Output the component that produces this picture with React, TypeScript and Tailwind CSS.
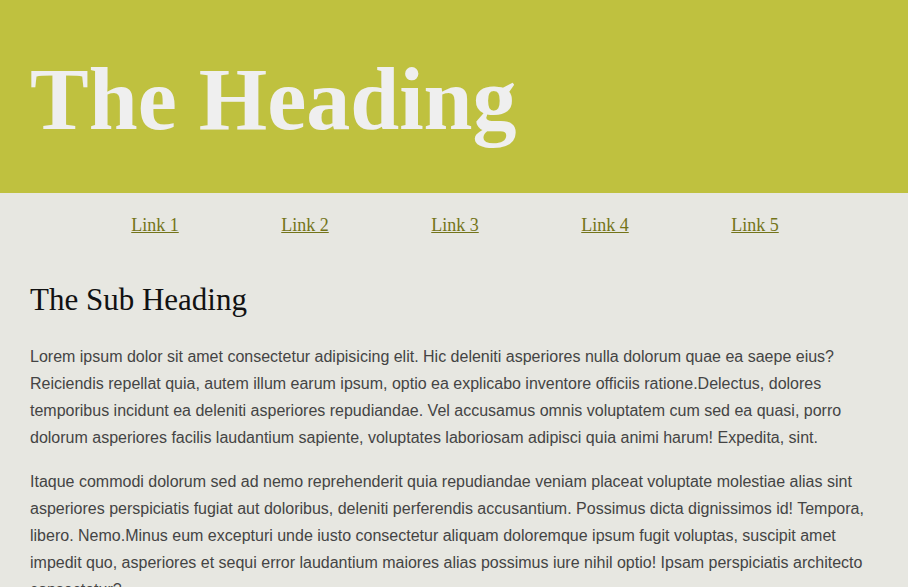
export default function App() {
  const links = ['Link 1', 'Link 2', 'Link 3', 'Link 4', 'Link 5'];

  return (
    <div className="min-h-[587px] bg-[#e7e7e1]">
      <header className="h-[193px] bg-[#bfc13f] px-[30px] pt-[56px]">
        <h1 className="font-['Liberation_Serif',serif] text-[88px] font-bold leading-none text-[#efefef]">
          The Heading
        </h1>
      </header>

      <nav className="py-[20px] pl-[2px]">
        <ul className="flex justify-center">
          {links.map((link) => (
            <li key={link} className="w-[150px] text-center">
              <a
                href="#"
                className="font-['Liberation_Serif',serif] text-[18px] leading-[24px] text-[#737419] underline"
              >
                {link}
              </a>
            </li>
          ))}
        </ul>
      </nav>

      <main className="px-[30px] pt-[25px]">
        <h2 className="font-['Liberation_Serif',serif] text-[31px] leading-[36px] text-[#111]">
          The Sub Heading
        </h2>
        <div className="mt-[25px] font-['Liberation_Sans',Arial,sans-serif] text-[16px] leading-[27px] text-[#444]">
          <p>
            Lorem ipsum dolor sit amet consectetur adipisicing elit. Hic deleniti asperiores nulla dolorum quae ea
            saepe eius? Reiciendis repellat quia, autem illum earum ipsum, optio ea explicabo inventore officiis
            ratione.Delectus, dolores temporibus incidunt ea deleniti asperiores repudiandae. Vel accusamus omnis
            voluptatem cum sed ea quasi, porro dolorum asperiores facilis laudantium sapiente, voluptates laboriosam
            adipisci quia animi harum! Expedita, sint.
          </p>
          <p className="mt-[17px]">
            Itaque commodi dolorum sed ad nemo reprehenderit quia repudiandae veniam placeat voluptate molestiae alias
            sint asperiores perspiciatis fugiat aut doloribus, deleniti perferendis accusantium. Possimus dicta
            dignissimos id! Tempora, libero. Nemo.Minus eum excepturi unde iusto consectetur aliquam doloremque ipsum
            fugit voluptas, suscipit amet impedit quo, asperiores et sequi error laudantium maiores alias possimus iure
            nihil optio! Ipsam perspiciatis architecto consectetur?
          </p>
        </div>
      </main>
    </div>
  );
}
